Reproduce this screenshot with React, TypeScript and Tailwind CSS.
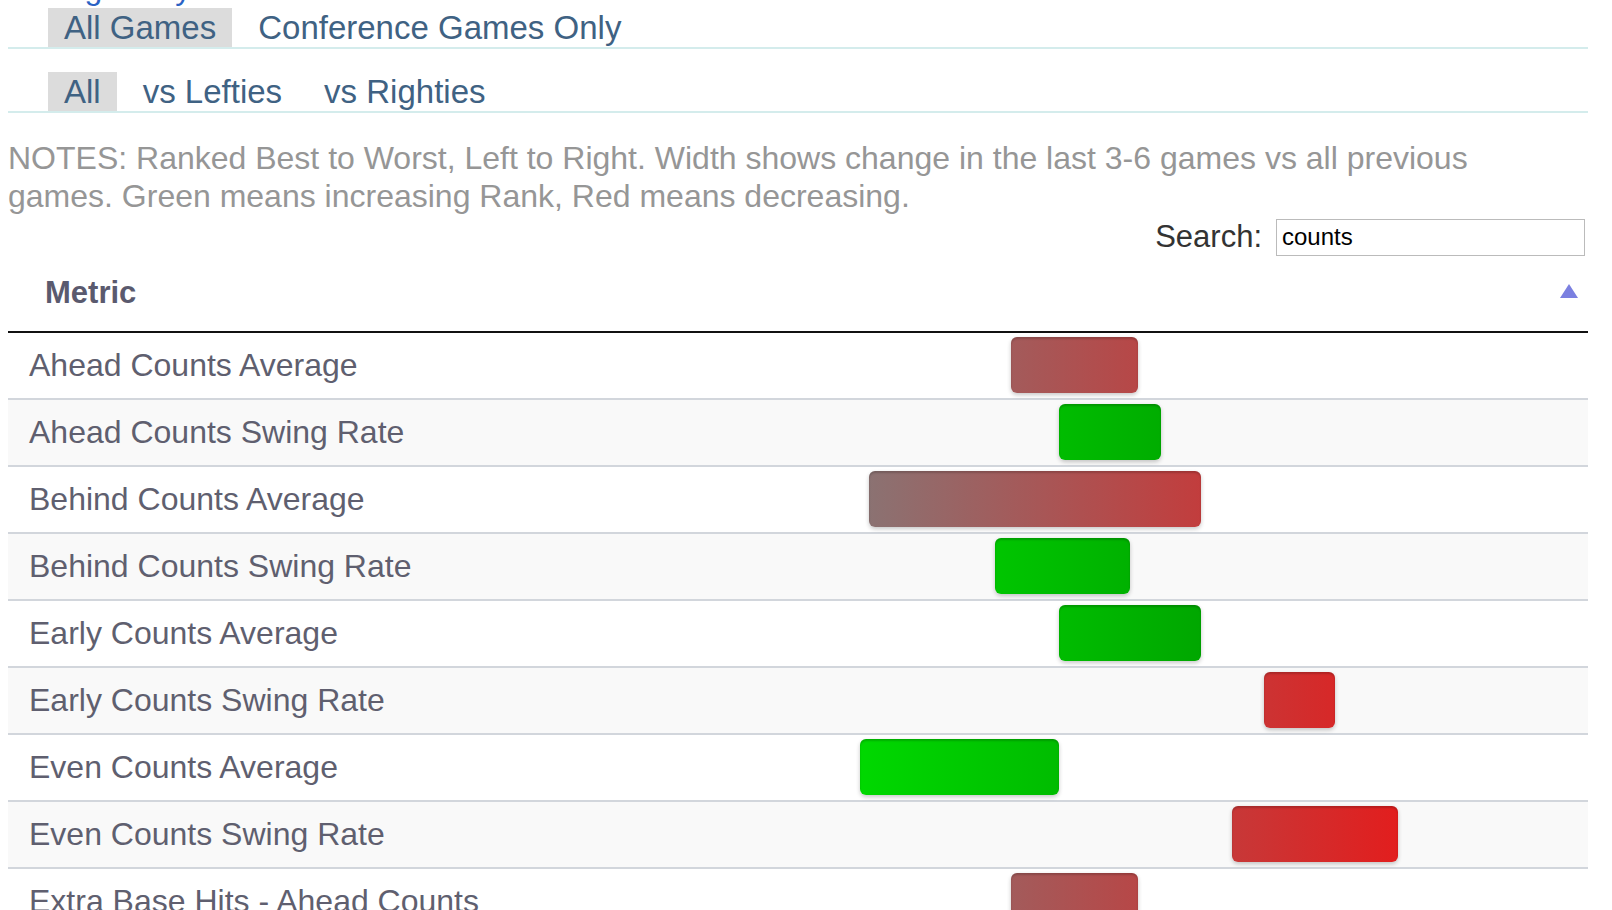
import React from "react";

type Row = { name: string; x1: number; x2: number; up: boolean };

// bar positions are in page pixels; the bar column starts at x=798
const BAR_ORIGIN = 798;

const rows: Row[] = [
  { name: "Ahead Counts Average", x1: 1011, x2: 1138, up: false },
  { name: "Ahead Counts Swing Rate", x1: 1059, x2: 1161, up: true },
  { name: "Behind Counts Average", x1: 869, x2: 1201, up: false },
  { name: "Behind Counts Swing Rate", x1: 995, x2: 1130, up: true },
  { name: "Early Counts Average", x1: 1059, x2: 1201, up: true },
  { name: "Early Counts Swing Rate", x1: 1264, x2: 1335, up: false },
  { name: "Even Counts Average", x1: 860, x2: 1059, up: true },
  { name: "Even Counts Swing Rate", x1: 1232, x2: 1398, up: false },
  { name: "Extra Base Hits - Ahead Counts", x1: 1011, x2: 1138, up: false },
];

const colorAt = (x: number, up: boolean) => {
  if (up) {
    const t = Math.min(1, Math.max(0, (x - 860) / 350));
    const g = Math.round(216 - 50 * t);
    return `rgb(0,${g},0)`;
  }
  const t = Math.min(1, Math.max(0, (x - 860) / 540));
  const r = Math.round(138 + 88 * t);
  const gb = Math.round(115 - 85 * t);
  return `rgb(${r},${gb},${gb})`;
};

const Tabs = ({ items }: { items: string[] }) => (
  <ul className="flex gap-[10px] pl-10 border-b-2 border-[#d4ecec]">
    {items.map((t, i) => (
      <li
        key={t}
        className={
          "h-[39px] px-4 flex items-center text-[33px] text-[#3f6283] " + (i === 0 ? "bg-[#dcdcdc]" : "")
        }
      >
        {t}
      </li>
    ))}
  </ul>
);

export default function App() {
  return (
    <div className="h-[910px] overflow-hidden bg-white pl-2 pr-6 font-['Liberation_Sans',Arial,sans-serif]">
      <div className="-mt-[28px] h-[32px] leading-[32px] text-[32px] text-[#2b62c4]">
        <span className="text-[#6b4fb8]">C</span>hange Player
      </div>

      <div className="mt-1">
        <Tabs items={["All Games", "Conference Games Only"]} />
      </div>
      <div className="mt-[23px]">
        <Tabs items={["All", "vs Lefties", "vs Righties"]} />
      </div>

      <p className="mt-[26px] w-[1500px] text-[32px] leading-[38px] text-[#969696]">
        NOTES: Ranked Best to Worst, Left to Right. Width shows change in the last 3-6 games vs all previous games.
        Green means increasing Rank, Red means decreasing.
      </p>

      <div className="flex items-center justify-end gap-[14px] pr-[3px] -mt-[1px]">
        <span className="text-[31px] text-[#333]">Search:</span>
        <div className="w-[309px] h-[37px] border border-[#bbb] flex items-center px-[5px] text-[24px] text-black">
          counts
        </div>
      </div>

      <div className="h-[72px] flex items-center justify-between border-b-2 border-[#111] pl-[37px] pr-[10px] pb-[4px]">
        <span className="text-[31px] font-bold text-[#5a5a6e]">Metric</span>
        <svg width="18" height="14" viewBox="0 0 18 14" className="-mt-[6px]">
          <polygon points="9,0 18,14 0,14" fill="#7b80e0" />
        </svg>
      </div>

      {rows.map((r, i) => (
        <div
          key={r.name}
          className={
            "grid grid-cols-[790px_1fr] h-[67px] border-b-2 border-[#d2d6dc] " + (i % 2 === 1 ? "bg-[#f9f9f9]" : "bg-white")
          }
        >
          <div className="flex items-center pl-[21px] text-[32px] text-[#5f5f6f] whitespace-nowrap">{r.name}</div>
          <div className="flex items-center">
            <div
              className="h-[56px] rounded-[6px] shadow-[inset_0_2px_2px_rgba(0,0,0,0.18),0_2px_4px_rgba(0,0,0,0.22)]"
              style={{
                marginLeft: r.x1 - BAR_ORIGIN,
                width: r.x2 - r.x1,
                background: `linear-gradient(to right, ${colorAt(r.x1, r.up)}, ${colorAt(r.x2, r.up)})`,
              }}
            />
          </div>
        </div>
      ))}
    </div>
  );
}
